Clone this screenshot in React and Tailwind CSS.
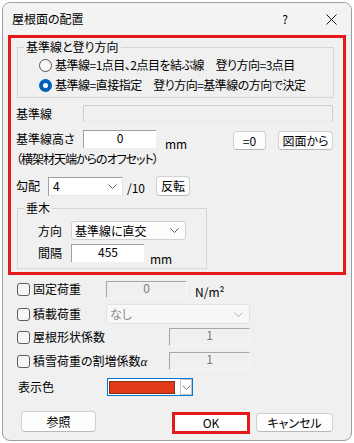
import React from "react";

const Chevron = ({ c = "#5a5a5a" }) => (
  <svg width="9" height="5" viewBox="0 0 9 5">
    <polyline points="0.5,0.5 4.5,4.5 8.5,0.5" fill="none" stroke={c} strokeWidth="1" />
  </svg>
);

const Btn = ({ children, className = "" }) => (
  <div
    className={
      "flex items-center justify-center rounded-[4px] border border-[#d0d0d0] border-b-[#b8b8b8] bg-[#fdfdfd] text-[12px] leading-[14px] text-black " +
      className
    }
  >
    {children}
  </div>
);

const Check = () => (
  <div className="w-[13px] h-[13px] shrink-0 rounded-[3px] border border-[#5c5c5c] bg-[#f6f6f6]" />
);

export default function App() {
  return (
    <div className="w-[354px] h-[443px] bg-white pt-[2px] pl-[2px] font-['Noto_Sans_CJK_JP',sans-serif] text-[12px] text-black [font-feature-settings:'palt']">
      <div className="w-[350px] h-[439px] border border-[#9e9e9e] rounded-[8px] bg-[#f0f0f0] overflow-hidden flex flex-col">
        {/* title bar */}
        <div className="h-[32px] shrink-0 bg-[#f3f3f3] flex items-center pl-[9px]">
          <span className="text-[12px] leading-[16px]">屋根面の配置</span>
          <div className="ml-auto flex items-center">
            <span className="w-[20px] text-center text-[12px] leading-[16px]">?</span>
            <span className="ml-[26px] w-[20px] flex justify-center">
              <svg width="11" height="11" viewBox="0 0 11 11">
                <path d="M0.5 0.5 L10.5 10.5 M10.5 0.5 L0.5 10.5" stroke="#1a1a1a" strokeWidth="1" />
              </svg>
            </span>
            <span className="w-[10px]" />
          </div>
        </div>

        {/* red highlight box */}
        <div className="ml-[5px] w-[338px] h-[240px] shrink-0 border-[3px] border-[#e3191b] flex flex-col">
          <fieldset className="mt-[1px] ml-[6px] w-[317px] h-[59px] border border-[#d6d6d6] p-0">
            <legend className="ml-[6px] px-[2px] leading-[16px]">基準線と登り方向</legend>
            <div className="flex items-center h-[20px] pl-[21px] gap-[3px]">
              <div className="w-[13px] h-[13px] rounded-full border border-[#555] bg-[#f8f8f8]" />
              <span className="leading-[16px] whitespace-nowrap tracking-[-0.5px]">基準線=1点目、2点目を結ぶ線　登り方向=3点目</span>
            </div>
            <div className="flex items-center h-[20px] pl-[21px] gap-[3px]">
              <div className="w-[13px] h-[13px] rounded-full bg-[#005fb8] flex items-center justify-center">
                <div className="w-[5px] h-[5px] rounded-full bg-white" />
              </div>
              <span className="leading-[16px] whitespace-nowrap tracking-[-0.5px]">基準線=直接指定　登り方向=基準線の方向で決定</span>
            </div>
          </fieldset>

          <div className="flex items-center mt-[7px] h-[17px] pl-[5px]">
            <span className="w-[67px] leading-[16px]">基準線</span>
            <div className="w-[250px] h-[17px] border border-[#cfcfcf] border-b-[#e8e8e8] bg-[#f0f0f0]" />
          </div>

          <div className="flex items-start mt-[8px] h-[20px] pl-[5px] pr-[10px]">
            <span className="w-[67px] leading-[18px]">基準線高さ</span>
            <div className="w-[73px] h-[18px] bg-white border-l border-t border-[#a0a0a0] text-center leading-[13px]">0</div>
            <span className="ml-[9px] mt-[7px] leading-[14px]">mm</span>
            <div className="flex-1" />
            <Btn className="mt-[1px] w-[33px] h-[19px]">=0</Btn>
            <Btn className="mt-[1px] ml-[12px] w-[55px] h-[19px]">図面から</Btn>
          </div>

          <div className="mt-[1px] pl-[5px] leading-[16px] whitespace-nowrap tracking-[-1px]">（横架材天端からのオフセット）</div>

          <div className="flex items-center mt-[9px] h-[20px] pl-[5px]">
            <span className="w-[32px] leading-[16px]">勾配</span>
            <div className="w-[75px] h-[19px] bg-white border border-[#a0a0a0] border-r-[#e3e3e3] border-b-[#e3e3e3] flex items-center justify-between pl-[4px] pr-[5px]">
              <span className="leading-[14px]">4</span>
              <Chevron />
            </div>
            <span className="ml-[4px] w-[29px] leading-[16px] mt-[3px]">/10</span>
            <Btn className="w-[34px] h-[20px]">反転</Btn>
          </div>

          <fieldset className="mt-[4px] ml-[6px] w-[190px] h-[69px] border border-[#d6d6d6] p-0">
            <legend className="ml-[6px] px-[2px] leading-[16px]">垂木</legend>
            <div className="flex items-center mt-[5px] h-[19px] pl-[20px]">
              <span className="w-[33px] leading-[16px]">方向</span>
              <div className="w-[115px] h-[19px] rounded-[3px] border border-[#d0d0d0] bg-[#fdfdfd] flex items-center justify-between pl-[3px] pr-[6px]">
                <span className="leading-[14px]">基準線に直交</span>
                <Chevron />
              </div>
            </div>
            <div className="flex items-start mt-[4px] h-[19px] pl-[20px]">
              <span className="w-[33px] leading-[18px]">間隔</span>
              <div className="w-[73px] h-[18px] bg-white border-l border-t border-[#a0a0a0] text-center leading-[13px]">455</div>
              <span className="ml-[6px] mt-[8px] leading-[14px]">mm</span>
            </div>
          </fieldset>
        </div>

        {/* lower section */}
        <div className="flex flex-col pl-[14px]">
          <div className="flex items-center mt-[5px] h-[18px]">
            <Check />
            <span className="ml-[3px] w-[73px] leading-[16px]">固定荷重</span>
            <div className="w-[81px] h-[17px] border border-[#a8a8a8] border-r-[#f8f8f8] border-b-[#f8f8f8] bg-[#f0f0f0] text-center text-[#7a7a7a] leading-[12px]">0</div>
            <span className="ml-[8px] mt-[6px] leading-[14px]">N/m²</span>
          </div>
          <div className="flex items-center mt-[6px] h-[20px]">
            <Check />
            <span className="ml-[3px] w-[73px] leading-[16px]">積載荷重</span>
            <div className="w-[144px] h-[20px] rounded-[3px] border border-[#e2e2e2] bg-[#f7f7f7] flex items-center justify-between pl-[3px] pr-[6px]">
              <span className="leading-[14px] text-[#8c8c8c]">なし</span>
              <Chevron c="#b4b4b4" />
            </div>
          </div>
          <div className="flex items-center mt-[4px] h-[18px]">
            <Check />
            <span className="ml-[3px] w-[136px] leading-[16px] whitespace-nowrap">屋根形状係数</span>
            <div className="w-[81px] h-[18px] border border-[#a8a8a8] border-r-[#f8f8f8] border-b-[#f8f8f8] bg-[#f0f0f0] text-center text-[#7a7a7a] leading-[12px]">1</div>
          </div>
          <div className="flex items-center mt-[6px] h-[18px]">
            <Check />
            <span className="ml-[3px] w-[136px] leading-[16px] whitespace-nowrap">
              積雪荷重の割増係数<span className="font-['Liberation_Serif',serif] italic text-[13px]">α</span>
            </span>
            <div className="w-[81px] h-[18px] border border-[#a8a8a8] border-r-[#f8f8f8] border-b-[#f8f8f8] bg-[#f0f0f0] text-center text-[#7a7a7a] leading-[12px]">1</div>
          </div>
          <div className="flex items-center mt-[8px] h-[18px]">
            <span className="pl-[1px] w-[90px] leading-[16px]">表示色</span>
            <div className="w-[86px] h-[18px] border border-[#0078d4] bg-white flex items-center pl-[1px]">
              <div className="w-[66px] h-[13px] bg-[#e13c17] border border-[#7a3322]" />
              <div className="ml-[5px] w-[12px] h-[16px] bg-white border border-[#c4c4c4] flex items-center justify-center">
                <Chevron c="#7a7a7a" />
              </div>
            </div>
          </div>
          <div className="flex items-start mt-[15px] h-[23px]">
            <Btn className="ml-[4px] w-[75px] h-[21px]">参照</Btn>
            <div className="ml-[76px] mt-[1px] w-[78px] h-[22px] border-[3px] border-[#e3191b] bg-white flex items-center justify-center leading-[14px]">OK</div>
            <Btn className="ml-[6px] mt-[2px] w-[77px] h-[19px]">キャンセル</Btn>
          </div>
        </div>
      </div>
    </div>
  );
}
